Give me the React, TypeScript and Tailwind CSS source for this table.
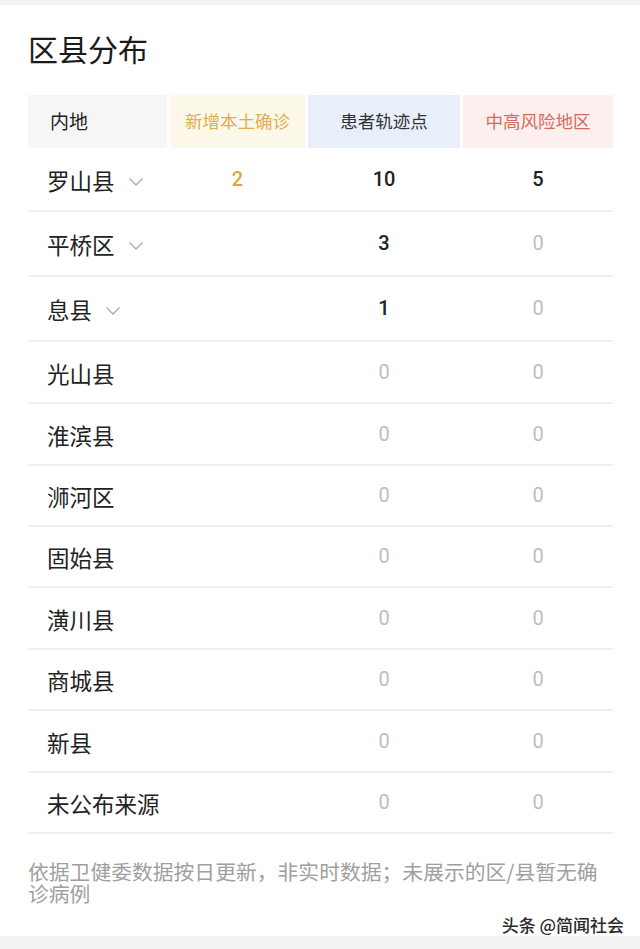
import React from 'react';

const ROWS = [
  { name: '罗山县', expand: true, a: 2, b: 10, c: 5, h: 'h-[64px]' },
  { name: '平桥区', expand: true, a: null, b: 3, c: 0, h: 'h-[65px]' },
  { name: '息县', expand: true, a: null, b: 1, c: 0, h: 'h-[65px]' },
  { name: '光山县', expand: false, a: null, b: 0, c: 0, h: 'h-[62px]' },
  { name: '淮滨县', expand: false, a: null, b: 0, c: 0, h: 'h-[62px]' },
  { name: '浉河区', expand: false, a: null, b: 0, c: 0, h: 'h-[61px]' },
  { name: '固始县', expand: false, a: null, b: 0, c: 0, h: 'h-[61px]' },
  { name: '潢川县', expand: false, a: null, b: 0, c: 0, h: 'h-[62px]' },
  { name: '商城县', expand: false, a: null, b: 0, c: 0, h: 'h-[61px]' },
  { name: '新县', expand: false, a: null, b: 0, c: 0, h: 'h-[62px]' },
  { name: '未公布来源', expand: false, a: null, b: 0, c: 0, h: 'h-[61px]' }
];

const FONT = "font-['Noto_Sans_CJK_SC','Noto_Sans',sans-serif]";

function Chevron() {
  return (
    <svg width="16" height="10" viewBox="0 0 16 10" className="ml-[13px] mt-[2px]">
      <path d="M1.5 1.5 L8 8 L14.5 1.5" fill="none" stroke="#a8a8a8" strokeWidth="1.3" />
    </svg>
  );
}

function Num({ v, accent }: { v: number | null; accent?: boolean }) {
  if (v === null) return <div />;
  const color = accent ? 'text-[#e3a73a] font-medium' : v === 0 ? 'text-[#bdbdbd] font-normal' : 'text-[#222] font-medium';
  return (
    <div className={`flex justify-center pb-[1px] text-[20px] font-['Roboto',sans-serif] ${color}`}>
      {v}
    </div>
  );
}

export default function App() {
  return (
    <div className={`w-[640px] h-[949px] bg-white flex flex-col ${FONT}`}>
      <div className="h-[5px] bg-[#f3f3f3]" />
      <div className="pl-[28px] pr-[27px]">
        <h1 className="pt-[23px] text-[30px] leading-[40px] font-normal text-[#1a1a1a]">区县分布</h1>

        <div className="mt-[27px] grid grid-cols-[139px_135px_152px_1fr] gap-x-[3px] h-[53px] text-[17.5px]">
          <div className="bg-[#f6f6f6] flex items-center pl-[22px] text-[19px] text-[#222]">内地</div>
          <div className="bg-[#fdf9ea] flex items-center justify-center text-[#e2ad4d]">新增本土确诊</div>
          <div className="bg-[#e8effb] flex items-center justify-center text-[#333]">患者轨迹点</div>
          <div className="bg-[#fdefee] flex items-center justify-center text-[#d4695e]">中高风险地区</div>
        </div>

        {ROWS.map((r) => (
          <div
            key={r.name}
            className={`grid grid-cols-[139px_135px_152px_1fr] gap-x-[3px] items-center border-b-2 border-[#f0f0f0] ${r.h}`}
          >
            <div className="flex items-center pl-[19px] pt-[3px] text-[22.5px] text-[#222]">
              {r.name}
              {r.expand && <Chevron />}
            </div>
            <Num v={r.a} accent />
            <Num v={r.b} />
            <Num v={r.c} />
          </div>
        ))}

        <p className="mt-[26px] text-[20.8px] leading-[22px] text-[#a0a0a0]">
          依据卫健委数据按日更新，非实时数据；未展示的区/县暂无确诊病例
        </p>
      </div>

      <div className="flex-1 flex items-end justify-end pr-[16px]">
        <span className="text-[17px] leading-[22px] text-[#2a2a2a] font-medium">头条 @简闻社会</span>
      </div>
      <div className="h-[13px] bg-[#f3f3f3]" />
    </div>
  );
}
